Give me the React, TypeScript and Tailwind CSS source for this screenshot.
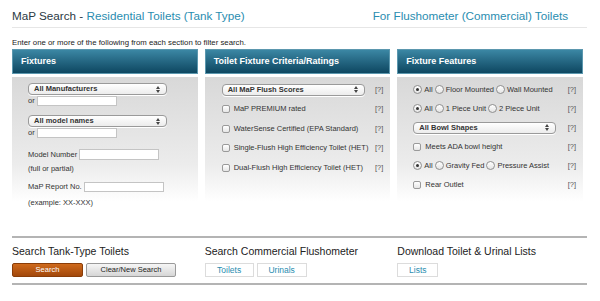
import React from "react";

const F = { fontFamily: '"Liberation Sans", Arial, sans-serif' };

function Select({ label, w }: { label: string; w: number }) {
  return (
    <div
      className="flex items-center justify-between h-[12px] rounded-[4px] border border-[#9a9a9a] bg-gradient-to-b from-white to-[#ececec] pl-[5px] pr-[6px] shadow-[0_1px_0_#fff]"
      style={{ width: w }}
    >
      <span className="text-[7.5px] font-bold text-[#333] leading-none">{label}</span>
      <svg width="4" height="7" viewBox="0 0 4 7">
        <path d="M0 3 L2 0 L4 3 Z" fill="#444" />
        <path d="M0 4 L2 7 L4 4 Z" fill="#444" />
      </svg>
    </div>
  );
}

function Input({ w, h = 10 }: { w: number; h?: number }) {
  return <div className="bg-white border border-[#c4c4c4]" style={{ width: w, height: h }} />;
}

function Check() {
  return <div className="w-[8px] h-[8px] rounded-[2px] border border-[#9a9a9a] bg-gradient-to-b from-white to-[#e6e6e6] shrink-0" />;
}

function Radio({ on }: { on?: boolean }) {
  return (
    <div className="w-[9px] h-[9px] rounded-full border border-[#8f8f8f] bg-gradient-to-b from-white to-[#e4e4e4] flex items-center justify-center shrink-0">
      {on && <div className="w-[3px] h-[3px] rounded-full bg-[#333]" />}
    </div>
  );
}

function Q() {
  return <span className="text-[7.5px] text-[#555] leading-none">[?]</span>;
}

function Header({ title }: { title: string }) {
  return (
    <div className="h-[25px] flex items-center pl-[8px] bg-gradient-to-b from-[#3b87a4] to-[#0d4761] border border-[#5b97ae] text-white text-[9px] font-bold">
      {title}
    </div>
  );
}

function Body({ children, pl = 16 }: { children: React.ReactNode; pl?: number }) {
  return (
    <div className="mt-[3px] h-[125px] bg-gradient-to-b from-[#d8d8d8] via-[#ececec] via-70% to-white" style={{ paddingLeft: pl }}>
      {children}
    </div>
  );
}

export default function App() {
  const lbl = "text-[7.5px] text-[#333] leading-none";
  return (
    <div className="w-[600px] h-[301px] bg-white overflow-hidden" style={F}>
      <div className="pl-[12px]">
        <div className="h-[28px] w-[575px] border-b border-[#e6e6e6] flex items-end justify-between pb-[5px] pr-[19px]">
          <div className="text-[11.7px] leading-none">
            <span className="text-[#2b3a44]">MaP Search - </span>
            <span className="text-[#2a8db0]">Residential Toilets (Tank Type)</span>
          </div>
          <div className="text-[11.7px] leading-none text-[#2a8db0]">For Flushometer (Commercial) Toilets</div>
        </div>
        <div className="h-[21px] flex items-center pt-[9px] text-[7.8px] text-[#222] leading-none">
          Enter one or more of the following from each section to filter search.
        </div>
        <div className="grid grid-cols-3 gap-x-[7px] w-[571px]">
          {/* Fixtures */}
          <div>
            <Header title="Fixtures" />
            <Body>
              <div className="pt-[6px]">
                <Select label="All Manufacturers" w={139} />
                <div className="mt-[1px] flex items-center gap-[2px] h-[10px]">
                  <span className={lbl}>or</span>
                  <Input w={80} />
                </div>
                <div className="mt-[9px]">
                  <Select label="All model names" w={139} />
                </div>
                <div className="mt-[1px] flex items-center gap-[2px] h-[10px]">
                  <span className={lbl}>or</span>
                  <Input w={80} />
                </div>
                <div className="mt-[11px] flex items-center gap-[2px] h-[11px]">
                  <span className={lbl}>Model Number</span>
                  <Input w={80} h={11} />
                </div>
                <div className={"mt-[3px] h-[11px] flex items-center " + lbl}>(full or partial)</div>
                <div className="mt-[8px] flex items-center gap-[2px] h-[10px]">
                  <span className={lbl}>MaP Report No.</span>
                  <Input w={80} />
                </div>
                <div className={"mt-[5px] h-[11px] flex items-center " + lbl}>(example: XX-XXX)</div>
              </div>
            </Body>
          </div>
          {/* Criteria */}
          <div>
            <Header title="Toilet Fixture Criteria/Ratings" />
            <Body pl={17}>
              <div className="pt-[3px] pr-[7px]">
                <div className="h-[19px] flex items-center justify-between">
                  <Select label="All MaP Flush Scores" w={143} />
                  <Q />
                </div>
                {[
                  "MaP PREMIUM rated",
                  "WaterSense Certified (EPA Standard)",
                  "Single-Flush High Efficiency Toilet (HET)",
                  "Dual-Flush High Efficiency Toilet (HET)",
                ].map((t) => (
                  <div key={t} className="h-[19.7px] flex items-center justify-between">
                    <div className="flex items-center gap-[4px]">
                      <Check />
                      <span className={lbl}>{t}</span>
                    </div>
                    <Q />
                  </div>
                ))}
              </div>
            </Body>
          </div>
          {/* Features */}
          <div>
            <Header title="Fixture Features" />
            <Body pl={16}>
              <div className="pt-[3px] pr-[7px]">
                <div className="h-[19px] flex items-center justify-between">
                  <div className="flex items-center gap-[2px]">
                    <Radio on />
                    <span className={lbl}>All</span>
                    <Radio />
                    <span className={lbl}>Floor Mounted</span>
                    <Radio />
                    <span className={lbl}>Wall Mounted</span>
                  </div>
                  <Q />
                </div>
                <div className="h-[19px] flex items-center justify-between">
                  <div className="flex items-center gap-[2px]">
                    <Radio on />
                    <span className={lbl}>All</span>
                    <Radio />
                    <span className={lbl}>1 Piece Unit</span>
                    <Radio />
                    <span className={lbl}>2 Piece Unit</span>
                  </div>
                  <Q />
                </div>
                <div className="h-[19px] flex items-center justify-between">
                  <Select label="All Bowl Shapes" w={143} />
                  <Q />
                </div>
                <div className="h-[19px] flex items-center justify-between">
                  <div className="flex items-center gap-[4px]">
                    <Check />
                    <span className={lbl}>Meets ADA bowl height</span>
                  </div>
                  <Q />
                </div>
                <div className="h-[19px] flex items-center justify-between">
                  <div className="flex items-center gap-[2px]">
                    <Radio on />
                    <span className={lbl}>All</span>
                    <Radio />
                    <span className={lbl}>Gravity Fed</span>
                    <Radio />
                    <span className={lbl}>Pressure Assist</span>
                  </div>
                  <Q />
                </div>
                <div className="h-[19px] flex items-center justify-between">
                  <div className="flex items-center gap-[4px]">
                    <Check />
                    <span className={lbl}>Rear Outlet</span>
                  </div>
                  <Q />
                </div>
              </div>
            </Body>
          </div>
        </div>
        <div className="mt-[34px] w-[575px] border-t-2 border-[#b4b4b4]" />
        <div className="grid grid-cols-3 gap-x-[7px] w-[571px] pt-[6px] pb-[6px]">
          <div>
            <div className="h-[14px] flex items-center text-[10.5px] text-[#222] leading-none">Search Tank-Type Toilets</div>
            <div className="mt-[5px] flex gap-[3px]">
              <div className="w-[71px] h-[14px] rounded-[2px] bg-gradient-to-b from-[#cf6a1c] to-[#a2480b] border border-[#8a3d08] flex items-center justify-center text-white text-[7.5px]">
                Search
              </div>
              <div className="w-[90px] h-[14px] rounded-[2px] bg-gradient-to-b from-[#f6f6f6] to-[#d6d6d6] border border-[#9a9a9a] flex items-center justify-center text-[#222] text-[7.5px]">
                Clear/New Search
              </div>
            </div>
          </div>
          <div>
            <div className="h-[14px] flex items-center text-[10.5px] text-[#222] leading-none">Search Commercial Flushometer</div>
            <div className="mt-[5px] flex gap-[3px]">
              <div className="w-[49px] h-[14px] border border-[#dcdcdc] flex items-center justify-center text-[#2a8db0] text-[8.5px]">Toilets</div>
              <div className="w-[50px] h-[14px] border border-[#dcdcdc] flex items-center justify-center text-[#2a8db0] text-[8.5px]">Urinals</div>
            </div>
          </div>
          <div>
            <div className="h-[14px] flex items-center text-[10.5px] text-[#222] leading-none">Download Toilet &amp; Urinal Lists</div>
            <div className="mt-[5px] flex">
              <div className="w-[41px] h-[14px] border border-[#dcdcdc] flex items-center justify-center text-[#2a8db0] text-[8.5px]">Lists</div>
            </div>
          </div>
        </div>
        <div className="w-[575px] border-t-2 border-[#b4b4b4]" />
      </div>
    </div>
  );
}
